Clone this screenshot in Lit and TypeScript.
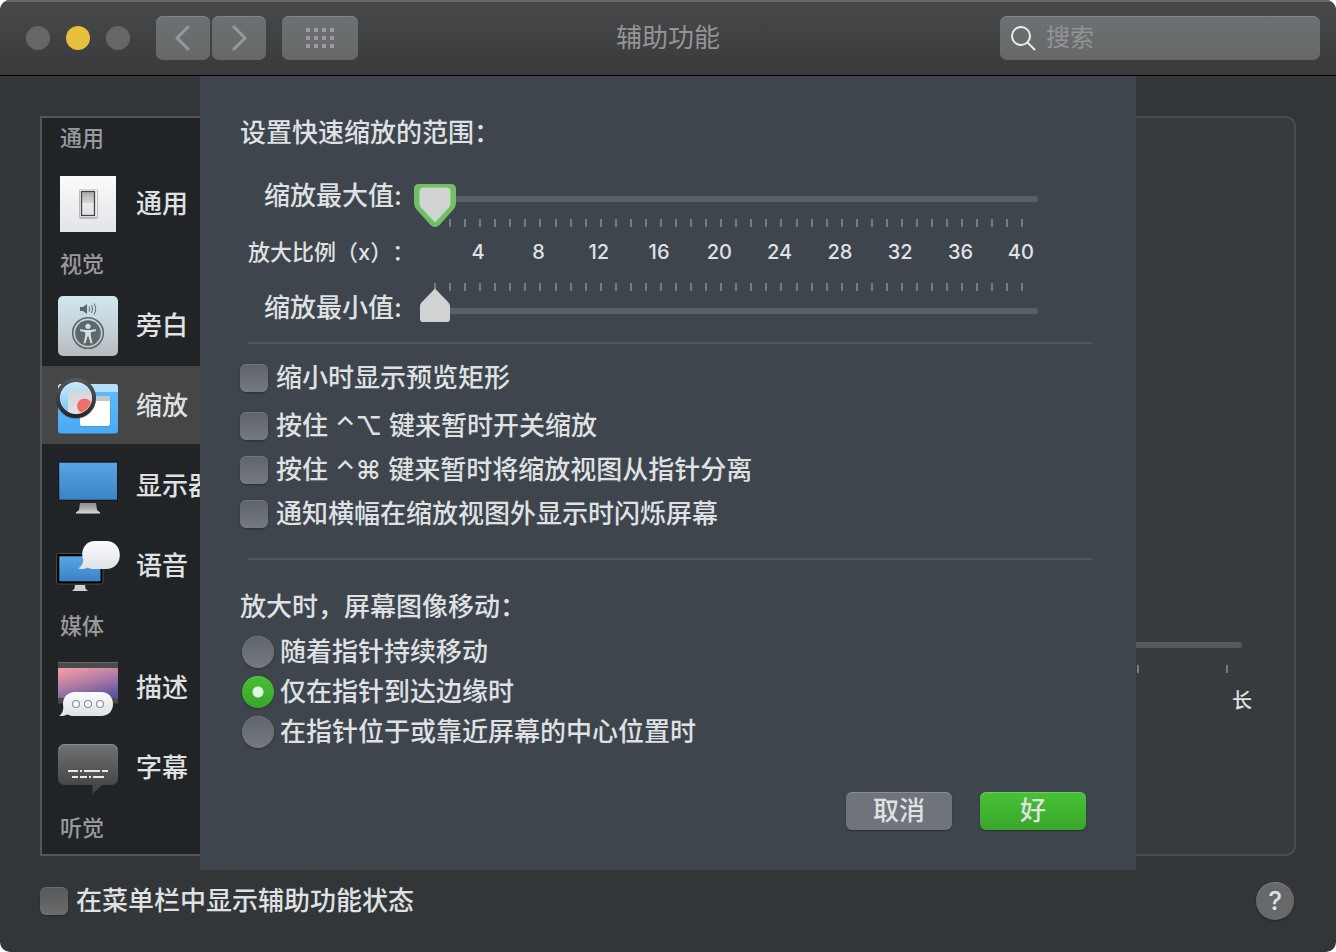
import { LitElement, html, css, svg } from "lit";
import { customElement, state } from "lit/decorators.js";
import { classMap } from "lit/directives/class-map.js";

const icons: Record<string, unknown> = {
  general: svg`
    <defs>
      <linearGradient id="g-plate" x2="0" y2="1"><stop stop-color="#fbfbfc"/><stop offset="1" stop-color="#e4e4e9"/></linearGradient>
      <linearGradient id="g-key" x2="0" y2="1"><stop stop-color="#a9a9ab"/><stop offset=".45" stop-color="#d4d4d6"/><stop offset=".5" stop-color="#ececef"/><stop offset="1" stop-color="#e0e0e4"/></linearGradient>
    </defs>
    <rect x="4" y="4" width="56" height="56" fill="url(#g-plate)"/>
    <rect x="23" y="17" width="19" height="30" rx="2" fill="#b9b9bc"/>
    <rect x="24" y="17.500" width="17" height="27.500" rx="1" fill="#f3f3f4"/>
    <rect x="25.500" y="19.500" width="13" height="24" fill="url(#g-key)" stroke="#434347" stroke-width="1.300"/>`,
  voiceover: svg`
    <defs><linearGradient id="v-bg" x2="0" y2="1"><stop stop-color="#d2e6ee"/><stop offset=".6" stop-color="#c3d0d5"/><stop offset="1" stop-color="#b5bbbd"/></linearGradient></defs>
    <rect x="2" y="2" width="60" height="60" rx="5" fill="url(#v-bg)"/>
    <path d="M24 13h3l4-3v10l-4-3h-3z" fill="#5b696e"/>
    <path d="M33 12.500q1.500 2.500 0 5M35.500 11q2.500 4 0 8M38 9.500q3.500 5.500 0 11" fill="none" stroke="#5b696e" stroke-width="1"/>
    <circle cx="32" cy="39" r="15.300" fill="none" stroke="#5d686b" stroke-width="1.600"/>
    <circle cx="32" cy="39" r="12.800" fill="#5d686b"/>
    <circle cx="32" cy="32.300" r="2.600" fill="#d5dfe2"/>
    <path d="M24 35.200l6 .9h4l6-.9v1.700l-5.200 1.300v3.500l1.700 7.500h-2l-2-6.800h-1l-2 6.800h-2l1.700-7.500v-3.500L24 36.900z" fill="#d5dfe2"/>`,
  zoom: svg`
    <defs>
      <linearGradient id="z-win" x2="0" y2="1"><stop stop-color="#62bdfb"/><stop offset="1" stop-color="#49aaf3"/></linearGradient>
      <linearGradient id="z-lens" x2="0" y2="1"><stop stop-color="#dff0fb"/><stop offset=".5" stop-color="#a8dcfb"/><stop offset="1" stop-color="#6bbdf5"/></linearGradient>
      <linearGradient id="z-doc" x2="0" y2="1"><stop stop-color="#cfd6db"/><stop offset="1" stop-color="#e6e6e8"/></linearGradient>
      <linearGradient id="z-ring" x2="0" y2="1"><stop stop-color="#55585a"/><stop offset="1" stop-color="#26282a"/></linearGradient>
      <clipPath id="z-clip"><circle cx="20" cy="24" r="16"/></clipPath>
    </defs>
    <rect x="2" y="10" width="60" height="49.500" rx="3" fill="url(#z-win)"/>
    <path d="M2 18v-5q0-3 3-3h54q3 0 3 3v5z" fill="#b5e0fb"/>
    <rect x="24" y="22" width="30.500" height="31" rx="2" fill="#2c83c4" opacity=".4"/>
    <rect x="24" y="22" width="30" height="30" rx="2" fill="#fff"/>
    <path d="M24 27v-3q0-2 2-2h26q2 0 2 2v3z" fill="#c4c7ca"/>
    <circle cx="20" cy="25" r="20" fill="#000" opacity=".25"/>
    <g clip-path="url(#z-clip)">
      <rect width="42" height="42" fill="url(#z-lens)"/>
      <rect x="12" y="16" width="40" height="30" rx="3" fill="url(#z-doc)"/>
      <circle cx="28.500" cy="32" r="8" fill="#f26c6a" stroke="#f4f4f5" stroke-width=".8"/>
    </g>
    <circle cx="20" cy="24" r="18" fill="none" stroke="url(#z-ring)" stroke-width="4"/>
    <circle cx="20" cy="24" r="15.700" fill="none" stroke="#e7eef2" stroke-width=".6" opacity=".8"/>`,
  display: svg`
    <defs>
      <linearGradient id="d-s" x2="0" y2="1"><stop stop-color="#5aa5e4"/><stop offset="1" stop-color="#3a82c4"/></linearGradient>
      <linearGradient id="d-f" x2="0" y2="1"><stop stop-color="#8b8b8b"/><stop offset=".7" stop-color="#bcbcbc"/><stop offset="1" stop-color="#e0e0e0"/></linearGradient>
    </defs>
    <rect x="2" y="7.500" width="60" height="39.500" rx="1" fill="#17191b"/>
    <rect x="3.200" y="8.700" width="57.800" height="37" fill="url(#d-s)"/>
    <path d="M24 49h16l1 7 3 2.500v1H20v-1l3-2.500z" fill="url(#d-f)"/>`,
  speech: svg`
    <defs>
      <linearGradient id="s-s" x2="0" y2="1"><stop stop-color="#5aa5e4"/><stop offset="1" stop-color="#3a82c4"/></linearGradient>
      <linearGradient id="s-b" x2="0" y2="1"><stop stop-color="#fbfcfd"/><stop offset="1" stop-color="#dfe2e7"/></linearGradient>
    </defs>
    <rect x=".7" y="19.500" width="46.300" height="30.500" rx="2" fill="#000" stroke="#5b5e60" stroke-width=".8"/>
    <rect x="3.300" y="22.300" width="41.200" height="25" fill="url(#s-s)"/>
    <path d="M19 51h10l.6 4 1.900 1.300v.7H16.500v-.7l1.900-1.300z" fill="#cfcfcf"/>
    <path d="M39 7h11c8.500 0 13.800 5.800 13.800 14S58.500 35 50 35H38c-2.500 0-4.600-.6-6.300-1.600-2.700 1.500-6 1.900-9.700 1 3.200-1.600 5-4.600 5.400-8.400-.9-1.600-1.200-3.200-1.200-5C26.200 12.800 31 7 39 7z" fill="url(#s-b)"/>`,
  descriptions: svg`
    <defs>
      <linearGradient id="m-p" x1=".2" x2=".7" y2="1"><stop stop-color="#ee9ca6"/><stop offset=".5" stop-color="#ae7ba5"/><stop offset="1" stop-color="#5e549b"/></linearGradient>
      <linearGradient id="m-b" x2="0" y2="1"><stop stop-color="#fbfbfd"/><stop offset="1" stop-color="#dfe1e8"/></linearGradient>
    </defs>
    <rect x="2" y="6" width="60" height="41.500" fill="#4b4a4c"/>
    <rect x="2" y="6" width="60" height="1" fill="#67666a"/>
    <rect x="2" y="12" width="60" height="30" fill="url(#m-p)"/>
    <path d="M19 36h26c7.500 0 12 5 12 12s-4.500 12-12 12H18c-2.500 0-4.500-.6-6.200-1.600C9.500 59.500 6.500 60.300 3 59.800c3-1.800 4.300-5 4.300-8.800-.2-1-.3-2-.3-3C7 41 11.500 36 19 36z" fill="url(#m-b)"/>
    <g fill="#f8f8fa" stroke="#8c8d94" stroke-width="1.100"><circle cx="20" cy="48" r="3.500"/><circle cx="32" cy="48" r="3.500"/><circle cx="44" cy="48" r="3.500"/></g>`,
  captions: svg`
    <defs><linearGradient id="c-b" x2="0" y2="1"><stop stop-color="#707172"/><stop offset="1" stop-color="#3d3e3f"/></linearGradient></defs>
    <path d="M9 8h46q7 0 7 7v27q0 7-7 7h-9l-9.500 9V49H9q-7 0-7-7V15q0-7 7-7z" fill="url(#c-b)"/>
    <path d="M3 13q1-4.500 6-4.500h46q5 0 6 4.500" fill="none" stroke="#8a8b8c" stroke-width="1"/>
    <path d="M12 35h10M24 35h2M28 35h16M46 35h6M16 41h6M24 41h7M33 41h2M37 41h11" stroke="#e8e8e8" stroke-width="2"/>`,
};

interface Entry { icon: string; label: string }
interface Section { title: string; entries: Entry[] }

const sections: Section[] = [
  { title: "通用", entries: [{ icon: "general", label: "通用" }] },
  {
    title: "视觉",
    entries: [
      { icon: "voiceover", label: "旁白" },
      { icon: "zoom", label: "缩放" },
      { icon: "display", label: "显示器" },
      { icon: "speech", label: "语音" },
    ],
  },
  {
    title: "媒体",
    entries: [
      { icon: "descriptions", label: "描述" },
      { icon: "captions", label: "字幕" },
    ],
  },
  { title: "听觉", entries: [] },
];

const controls = css`
  * { box-sizing: border-box; }
  button, input { font: inherit; color: inherit; margin: 0; }
  button { border: 0; padding: 0; }
  .choice { display: flex; align-items: center; gap: 8px; line-height: 28px; white-space: nowrap; }
  .box {
    appearance: none; flex: none; width: 28px; height: 28px; border-radius: 6px;
    background: linear-gradient(var(--control-top), var(--control-bottom));
    box-shadow: inset 0 1px 0 rgba(255, 255, 255, 0.12), 0 1px 2px rgba(0, 0, 0, 0.3);
  }
  .box:checked { background: #41b72f; }
  .range {
    appearance: none; display: block; width: 100%; background: none; outline: none;
  }
  .ticks { display: flex; justify-content: space-between; height: 8px; }
  .tick { width: 2px; background: var(--tick); }
  .track { height: 6px; border-radius: 3px; background: var(--track); }
`;

@customElement("zoom-sheet")
export class ZoomSheet extends LitElement {
  @state() private movement = 1;

  static styles = [
    controls,
    css`
      :host {
        display: block;
        padding: 37px 44px 40px 40px;
        background: #3e454c;
        --control-top: #5f636b;
        --control-bottom: #757982;
        --tick: #737980;
        --track: #5a6067;
      }
      .title { margin: 0; font-size: 26px; font-weight: 500; line-height: 40px; }
      .scales {
        display: grid; grid-template-columns: 162px 1fr; column-gap: 12px;
        margin-top: 23px; padding-right: 48px;
      }
      .name { line-height: 40px; text-align: right; white-space: nowrap; }
      .lower-name { margin-top: 12px; }
      .slider { display: grid; align-items: start; }
      .slider > * { grid-area: 1 / 1; }
      .slider .track { margin: 0 6px; }
      .slider .ticks { margin: 0 20px; }
      .upper { margin-top: 8px; }
      .upper .range { height: 44px; }
      .upper .track { margin-top: 12px; }
      .upper .ticks { margin-top: 35px; }
      .lower .range { height: 46px; }
      .lower .track { margin-top: 32px; }
      .lower .ticks { margin-top: 7px; }
      .range::-webkit-slider-thumb { appearance: none; width: 42px; background: center / 100% 100% no-repeat; }
      .upper .range::-webkit-slider-thumb {
        height: 44px;
        background-image: url("data:image/svg+xml,%3Csvg xmlns='http://www.w3.org/2000/svg' viewBox='0 0 42 44'%3E%3Cpath d='M5 0h32q5 0 5 5v14q0 4-3 7L25.500 41q-4.500 4-9 0L3 26q-3-3-3-7V5q0-5 5-5z' fill='%2374bd67'/%3E%3Cpath d='M9 4h24q3 0 3 3v13q0 2-1.500 3.500L21 38 7.500 23.500Q6 22 6 20V7q0-3 3-3z' fill='%23d0d2d4' stroke='%23b5eba6'/%3E%3C/svg%3E");
      }
      .lower .range::-webkit-slider-thumb {
        height: 46px;
        background-image: url("data:image/svg+xml,%3Csvg xmlns='http://www.w3.org/2000/svg' viewBox='0 0 42 46'%3E%3Cpath d='M21 12.500L34.500 26.500Q36 28 36 30v13q0 3-3 3H9q-3 0-3-3V30q0-2 1.500-3.500z' fill='%23d0d2d4'/%3E%3C/svg%3E");
      }
      .ratio { padding-left: 8px; font-size: 22px; line-height: 48px; white-space: nowrap; text-spacing-trim: space-all; }
      .numbers { display: flex; margin: 0 -7px 0 34px; font-size: 20px; line-height: 48px; text-align: center; }
      .number { flex: 1; }
      .rule { border: 0; height: 2px; margin: 0 0 0 8px; background: #50575e; }
      .rule.first { margin-top: 14px; }
      .rule.second { margin-top: 30px; }
      .options { display: grid; gap: 20px; margin-top: 20px; }
      .keys { display: grid; gap: 16px; }
      .movement { border: 0; margin: 27px 0 0; padding: 0; display: grid; gap: 8px; }
      .legend { padding: 0; margin-bottom: 9px; line-height: 40px; }
      .radio { gap: 6px; line-height: 32px; padding-left: 2px; }
      .dot {
        appearance: none; flex: none; width: 32px; height: 32px; border-radius: 50%;
        background: linear-gradient(var(--control-top), var(--control-bottom));
        box-shadow: inset 0 1px 0 rgba(255, 255, 255, 0.12), 0 1px 2px rgba(0, 0, 0, 0.3);
      }
      .dot:checked { background: radial-gradient(circle, #dff8dc 5px, transparent 6px), linear-gradient(#46c033, #39a42b); }
      .actions { display: flex; justify-content: flex-end; gap: 28px; margin-top: 44px; padding-right: 6px; }
      .action {
        width: 106px; height: 38px; border-radius: 6px; background: #6f737b; line-height: 38px;
        box-shadow: inset 0 1px 0 rgba(255, 255, 255, 0.2), 0 1px 2px rgba(0, 0, 0, 0.35);
      }
      .primary { background: linear-gradient(#46c235, #3aa62b); }
    `,
  ];

  private ticks() {
    return html`<div class="ticks">${Array.from({ length: 40 }, () => html`<span class="tick"></span>`)}</div>`;
  }

  private check(label: string) {
    return html`<label class="choice"><input class="box" type="checkbox" />${label}</label>`;
  }

  render() {
    const modes = ["随着指针持续移动", "仅在指针到达边缘时", "在指针位于或靠近屏幕的中心位置时"];
    return html`
      <h2 class="title">设置快速缩放的范围：</h2>
      <div class="scales">
        <label class="name" for="max">缩放最大值:</label>
        <div class="slider upper">
          <div class="track"></div>
          ${this.ticks()}
          <input id="max" class="range" type="range" min="1" max="40" value="1" />
        </div>
        <span class="ratio">放大比例（x）：</span>
        <div class="numbers">
          ${[4, 8, 12, 16, 20, 24, 28, 32, 36, 40].map((n) => html`<span class="number">${n}</span>`)}
        </div>
        <label class="name lower-name" for="min">缩放最小值:</label>
        <div class="slider lower">
          <div class="track"></div>
          ${this.ticks()}
          <input id="min" class="range" type="range" min="1" max="40" value="1" />
        </div>
      </div>
      <hr class="rule first" />
      <div class="options">
        ${this.check("缩小时显示预览矩形")}
        <div class="keys">
          ${this.check("按住 ⌃⌥ 键来暂时开关缩放")}
          ${this.check("按住 ⌃⌘ 键来暂时将缩放视图从指针分离")}
          ${this.check("通知横幅在缩放视图外显示时闪烁屏幕")}
        </div>
      </div>
      <hr class="rule second" />
      <fieldset class="movement">
        <legend class="legend">放大时，屏幕图像移动：</legend>
        ${modes.map(
          (text, i) => html`<label class="choice radio"
            ><input class="dot" type="radio" name="movement" .checked=${this.movement === i} @change=${() => (this.movement = i)} />${text}</label
          >`
        )}
      </fieldset>
      <div class="actions">
        <button class="action" type="button">取消</button>
        <button class="action primary" type="button">好</button>
      </div>
    `;
  }
}

@customElement("app-root")
export class AppRoot extends LitElement {
  @state() private selected = "zoom";

  static styles = [
    controls,
    css`
      :host {
        display: block; background: #fff; color: #dfe1e3;
        font: 500 26px/1.4 Inter, "Noto Sans CJK SC", sans-serif;
      }
      .window {
        display: flex; flex-direction: column; min-height: 100vh; overflow: hidden;
        border-radius: 10px; background: #333638;
      }
      .bar {
        display: grid; grid-template-columns: 1fr auto 1fr; align-items: center;
        height: 76px; padding: 0 16px; border-bottom: 1px solid #000;
        background: linear-gradient(#47494b, #3a3a3b);
        box-shadow: inset 0 2px 0 #66696a;
      }
      .tools { display: flex; align-items: center; padding-left: 10px; }
      .lights { display: flex; gap: 16px; margin-right: 26px; }
      .light { width: 24px; height: 24px; border-radius: 50%; background: #656668; }
      .amber { background: #e6bf3c; }
      .pair { display: flex; gap: 2px; margin-right: 16px; }
      .tool {
        display: grid; place-items: center; width: 54px; height: 44px; border-radius: 7px;
        background: linear-gradient(#6d7173, #666768); box-shadow: inset 0 1px 0 #808486;
      }
      .wide { width: 76px; }
      .caption { margin: 0; font-size: 26px; font-weight: 400; line-height: 40px; color: #939596; }
      .search {
        justify-self: end; display: flex; align-items: center; gap: 10px; width: 320px; height: 44px;
        padding: 0 10px; border-radius: 7px;
        background: linear-gradient(#6d7173, #666768); box-shadow: inset 0 1px 0 #808486;
      }
      .search svg { flex: none; }
      .query { flex: 1; min-width: 0; padding: 0; border: 0; outline: 0; background: none; font-size: 24px; font-weight: 400; line-height: 36px; }
      .query::placeholder { color: #929496; opacity: 1; }
      .main { position: relative; flex: 1; display: flex; gap: 40px; padding: 40px 40px 0; }
      .side { width: 320px; min-height: 740px; border: 2px solid #555658; background: #212426; }
      .heading { margin: 0 0 2px; padding-left: 18px; font-size: 22px; font-weight: 500; line-height: 40px; color: #98999b; }
      .section:first-child .heading { margin-bottom: 6px; }
      .entry {
        display: flex; align-items: center; gap: 16px; height: 80px; padding: 2px 0 0 14px;
        border-bottom: 2px solid transparent; background-clip: padding-box;
        color: inherit; text-decoration: none; white-space: nowrap;
      }
      .current { background-color: #464647; }
      .entry svg { flex: none; }
      .panel {
        flex: 1; display: flex; flex-direction: column; align-items: flex-end; justify-content: flex-end;
        padding: 0 52px 137px; border: 2px solid #4a4d4f; border-radius: 10px; background: #383b3d;
      }
      .delay { width: 386px; max-width: 100%; --track: #57585a; --tick: #77797b; }
      .delay .range { height: 6px; border-radius: 3px; background: var(--track); }
      .delay .range::-webkit-slider-thumb { appearance: none; width: 30px; height: 30px; border-radius: 4px; background: #d0d2d4; }
      .delay .ticks { margin: 17px 14px 0; }
      .end { margin: 12px -10px 0 0; font-size: 20px; line-height: 32px; text-align: right; }
      .sheet { position: absolute; top: 0; left: 200px; right: 200px; }
      .foot {
        display: flex; align-items: center; justify-content: space-between; height: 96px; padding: 0 42px 6px 40px;
        --control-top: #565859; --control-bottom: #6b6c6d;
      }
      .help {
        width: 38px; height: 38px; border-radius: 50%; background: #67686a; line-height: 38px;
        box-shadow: inset 0 1px 0 rgba(255, 255, 255, 0.18), 0 1px 2px rgba(0, 0, 0, 0.35);
      }
    `,
  ];

  private chevron(d: string) {
    return html`<svg width="18" height="26" viewBox="0 0 18 26" fill="none" stroke="#94999b" stroke-width="3" stroke-linecap="round" stroke-linejoin="round"><path d=${d} /></svg>`;
  }

  private section(s: Section) {
    return html`<section class="section">
      <h3 class="heading">${s.title}</h3>
      ${s.entries.map(
        (e) => html`<a
          class=${classMap({ entry: true, current: e.icon === this.selected })}
          href="#${e.icon}"
          @click=${() => (this.selected = e.icon)}
          ><svg width="64" height="64" viewBox="0 0 64 64" aria-hidden="true">${icons[e.icon]}</svg>${e.label}</a
        >`
      )}
    </section>`;
  }

  render() {
    return html`
      <div class="window">
        <header class="bar">
          <div class="tools">
            <div class="lights"><span class="light"></span><span class="light amber"></span><span class="light"></span></div>
            <div class="pair">
              <button class="tool" type="button" aria-label="后退">${this.chevron("M14 2 3 13l11 11")}</button>
              <button class="tool" type="button" aria-label="前进">${this.chevron("M4 2l11 11L4 24")}</button>
            </div>
            <button class="tool wide" type="button" aria-label="显示全部">
              <svg width="28" height="20" viewBox="0 0 28 20" fill="#999d9f">
                ${[0, 8, 16].map((y) => [0, 8, 16, 24].map((x) => svg`<rect x=${x} y=${y} width="4" height="4"/>`))}
              </svg>
            </button>
          </div>
          <h1 class="caption">辅助功能</h1>
          <label class="search">
            <svg width="26" height="26" viewBox="0 0 26 26" fill="none" stroke="#ececed" stroke-width="2" stroke-linecap="round"><circle cx="11" cy="11" r="9" /><path d="M17.500 17.500 24.500 24.500" /></svg>
            <input class="query" type="text" placeholder="搜索" aria-label="搜索" />
          </label>
        </header>
        <main class="main">
          <nav class="side">${sections.map((s) => this.section(s))}</nav>
          <div class="panel">
            <div class="delay">
              <input class="range" type="range" min="0" max="4" value="1" aria-label="长" />
              <div class="ticks">${[0, 1, 2, 3, 4].map(() => html`<span class="tick"></span>`)}</div>
              <div class="end">长</div>
            </div>
          </div>
          <zoom-sheet class="sheet"></zoom-sheet>
        </main>
        <footer class="foot">
          <label class="choice"><input class="box" type="checkbox" />在菜单栏中显示辅助功能状态</label>
          <button class="help" type="button" aria-label="帮助">?</button>
        </footer>
      </div>
    `;
  }
}
